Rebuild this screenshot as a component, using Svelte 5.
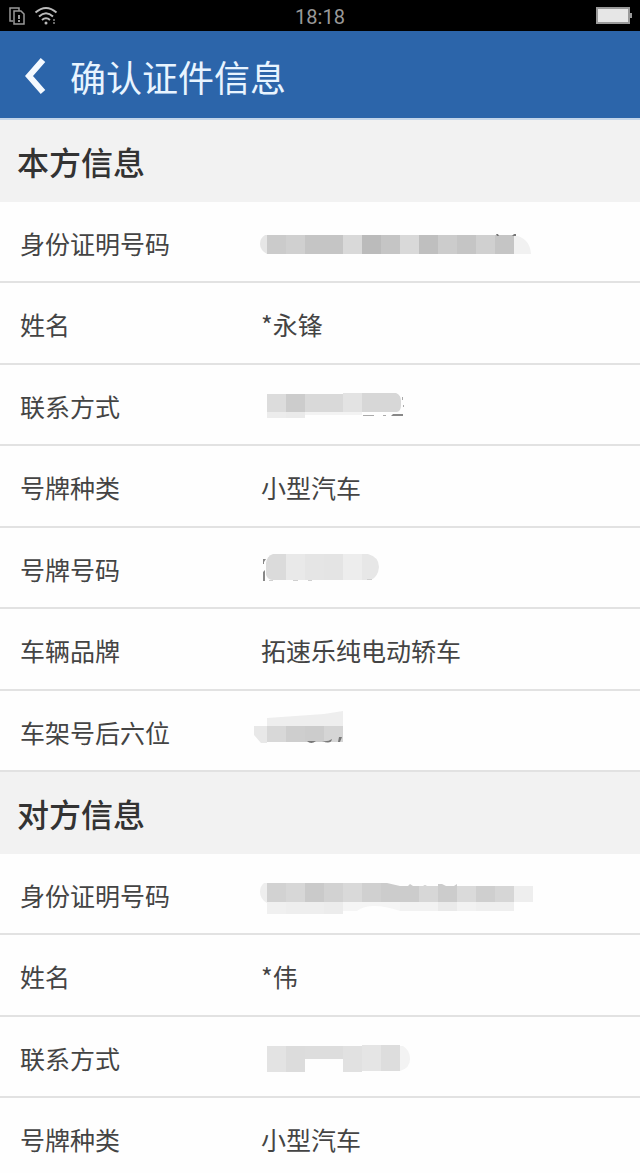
<script lang="ts">
	type Block = [x: number, y: number, width: number, height: number, fill: string];

	interface Mask {
		blocks: Block[];
		shapes?: { d: string; fill: string }[];
	}

	interface Row {
		label: string;
		value?: string;
		mask?: Mask;
	}

	// width of one mosaic tile
	const TILE = 19;

	// a strip of tiles that starts at the given column
	const strip = (start: number, y: number, height: number, fills: string[]): Block[] =>
		fills.map((fill, i) => [15 + (start + i) * TILE, y, TILE, height, fill]);

	const ownId: Mask = {
		blocks: strip(0, 33, 19, [
			'#cbcbcb', '#d0d0d0', '#c5c5c5', '#c5c5c5', '#d9d9d9', '#bbbbbb', '#c5c5c5',
			'#d9d9d9', '#bfbfbf', '#cccccc', '#c5c5c5', '#d0d0d0', '#c5c5c5'
		]),
		shapes: [
			{ d: 'M15 33h-2q-5 3-5 9t7 10z', fill: '#e6e6e6' },
			{ d: 'M262 34h4q12 4 13 18h-17z', fill: '#f1f1f1' },
			{ d: 'M244 32h2l1 2h-2zM260 34l2-2h2v2z', fill: '#777777' }
		]
	};

	const ownPhone: Mask = {
		blocks: [
			...strip(0, 29, 18, ['#dcdcdc', '#cccccc', '#d9d9d9', '#d9d9d9', '#e3e3e3', '#d6d6d6']),
			...strip(0, 47, 6, ['#ececec', '#eaeaea']),
			...strip(2, 47, 3, ['#f3f3f3', '#f3f3f3', '#f3f3f3'])
		],
		shapes: [
			{ d: 'M91 29v-1h53q5 2 5 8v4q0 6-4 7h-35V29z', fill: '#d7d7d7' },
			{ d: 'M91 28h19v19H91z', fill: '#e3e3e3' },
			{ d: 'M111 50h11v1h-11zM131 50h3v1h-3zM150 32h1v3h-1zM151 40h1v2h-1z', fill: '#aaaaaa' },
			{ d: 'M141 49h10v2h-12z', fill: '#888888' }
		]
	};

	const ownPlate: Mask = {
		blocks: strip(1, 26, 26, ['#e9e9e9', '#e5e5e5', '#e4e4e4', '#ededed']),
		shapes: [
			{ d: 'M34 26h-13q-6 2-7 9v12q2 5 7 5h13z', fill: '#dbdbdb' },
			{ d: 'M110 26h6q11 3 11 13-1 10-8 13h-9z', fill: '#e7e7e7' },
			{ d: 'M11 31h3l-2 3v2h-1zM11 44l2-2v11h-2z', fill: '#888888' },
			{ d: 'M17 52h4v1h-4zM41 52h5v1h-5zM56 52h4v1h-4zM115 51h5v1h-5z', fill: '#d0d0d0' }
		]
	};

	const ownFrame: Mask = {
		blocks: strip(0, 35, 16, ['#d8d8d8', '#cecece', '#cccccc', '#d5d5d5']),
		shapes: [
			{ d: 'M15 35v-8l57-4 19-3v15z', fill: '#eeeeee' },
			{ d: 'M15 35H2v9l7 8h6z', fill: '#e8e8e8' },
			{ d: 'M55 50h9q-5 4-9 0M70 50q6 1 10-2-1 6-10 2M87 46h3l-2 5h-2z', fill: '#777777' }
		]
	};

	const otherId: Mask = {
		blocks: [
			...strip(0, 29, 19, [
				'#d2d2d2', '#d7d7d7', '#cacaca', '#d2d2d2', '#d9d9d9', '#d0d0d0'
			]),
			...strip(7, 32, 16, [
				'#cccccc', '#d7d7d7', '#cccccc', '#dadada', '#cfcfcf', '#d6d6d6', '#eeeeee'
			]),
			...strip(0, 48, 12, ['#f0f0f0', '#eeeeee', '#eeeeee', '#ececec']),
			...strip(7, 48, 9, ['#f2f2f2', '#f2f2f2', '#eaeaea', '#f2f2f2', '#efefef', '#efefef'])
		],
		shapes: [
			{ d: 'M15 29h-3q-4 3-4 9 0 7 7 11z', fill: '#eeeeee' },
			{ d: 'M129 29h6l13 3v16h-19z', fill: '#cccccc' },
			{ d: 'M91 48h57v9q-30-10-43 0H91z', fill: '#f5f5f5' },
			{ d: 'M156 32l2-2 3 2zM171 32l2-1 2 1zM186 32v-2h4l4 2zM202 32l3-2v2z', fill: '#cccccc' }
		]
	};

	const otherPhone: Mask = {
		blocks: [
			...strip(0, 29, 26, ['#e3e3e3', '#dcdcdc']),
			...strip(2, 29, 13, ['#dddddd', '#dddddd']),
			...strip(4, 29, 26, ['#e1e1e1']),
			...strip(5, 28, 26, ['#e5e5e5', '#dddddd'])
		],
		shapes: [{ d: 'M148 29h3q7 4 7 13t-10 12z', fill: '#f3f3f3' }]
	};

	const sections: { title: string; rows: Row[] }[] = [
		{
			title: '本方信息',
			rows: [
				{ label: '身份证明号码', mask: ownId },
				{ label: '姓名', value: '*永锋' },
				{ label: '联系方式', mask: ownPhone },
				{ label: '号牌种类', value: '小型汽车' },
				{ label: '号牌号码', mask: ownPlate },
				{ label: '车辆品牌', value: '拓速乐纯电动轿车' },
				{ label: '车架号后六位', mask: ownFrame }
			]
		},
		{
			title: '对方信息',
			rows: [
				{ label: '身份证明号码', mask: otherId },
				{ label: '姓名', value: '*伟' },
				{ label: '联系方式', mask: otherPhone },
				{ label: '号牌种类', value: '小型汽车' }
			]
		}
	];
</script>

<div class="screen">
	<div class="status-bar">
		<div class="status-icons">
			<!-- sim cards -->
			<svg width="18" height="20" viewBox="0 0 18 20" fill="none" stroke="#999" stroke-width="1.5">
				<path d="M5 15H2V2h9v3" />
				<path d="M6 5h7l3 3v10H6z" />
				<path d="M11 9v4M11 14v2" stroke-width="2" />
			</svg>
			<!-- wifi -->
			<svg width="24" height="20" viewBox="0 0 24 20" fill="none" stroke="#bbb" stroke-width="2">
				<path d="M1.5 6.5Q12-2.500 22.500 6.500" />
				<path d="M5 10.500Q12 4 19 10.500" />
				<path d="M8 14Q12 10.500 16 14" />
				<circle cx="12" cy="17" r="1.500" fill="#bbb" stroke="none" />
				<path d="M20 13v2M20 16v2" stroke="#666" />
			</svg>
		</div>
		<time class="clock">18:18</time>
		<svg class="battery" width="36" height="17" viewBox="0 0 36 17">
			<rect x="1" y="1" width="32" height="15" fill="#e6e6e6" stroke="#999" stroke-width="2" />
			<rect x="34" y="6" width="2" height="5" fill="#999" />
		</svg>
	</div>

	<header>
		<button class="back" aria-label="返回">
			<svg width="22" height="38" viewBox="0 0 22 38" fill="none" stroke="#f4f9ff" stroke-width="6">
				<path d="M19 3L5 19l14 16" />
			</svg>
		</button>
		<h1>确认证件信息</h1>
	</header>

	<main>
		{#each sections as section}
			<section>
				<h2>{section.title}</h2>
				<dl>
					{#each section.rows as row}
						<div class="row">
							<dt>{row.label}</dt>
							<dd>
								{#if row.mask}
									<!-- mosaic over the private value -->
									<svg class="mask" width="300" height="79" viewBox="0 0 300 79">
										{#each row.mask.blocks as [x, y, width, height, fill]}
											<rect {x} {y} {width} {height} {fill} />
										{/each}
										{#each row.mask.shapes ?? [] as shape}
											<path d={shape.d} fill={shape.fill} />
										{/each}
									</svg>
								{:else}
									<span>{row.value}</span>
								{/if}
							</dd>
						</div>
					{/each}
				</dl>
			</section>
		{/each}
	</main>
</div>

<style>
	:global(body) {
		margin: 0;
		background: #fefefe;
	}

	.screen {
		height: 100vh;
		overflow: hidden;
		font-family: 'Noto Sans CJK SC', 'Noto Sans', sans-serif;
		color: #444;
		background: #fefefe;
	}

	.status-bar {
		display: grid;
		grid-template-columns: 1fr auto 1fr;
		align-items: center;
		height: 31px;
		padding: 0 8px;
		background: #000;
	}

	.status-icons {
		display: flex;
		align-items: center;
		gap: 8px;
	}

	.clock {
		padding-top: 2px;
		font-family: Roboto, sans-serif;
		font-size: 20px;
		line-height: 28px;
		color: #999;
	}

	.battery {
		justify-self: end;
	}

	header {
		display: flex;
		align-items: center;
		gap: 24px;
		box-sizing: border-box;
		height: 89px;
		padding-top: 2px;
		padding-left: 24px;
		background: #2c65aa;
		border-bottom: 2px solid #c3d5e9;
	}

	.back {
		display: flex;
		padding: 0;
		border: none;
		background: none;
		cursor: pointer;
	}

	h1 {
		margin: 0;
		font-size: 36px;
		font-weight: 400;
		line-height: 48px;
		color: #e8f4ff;
	}

	h2 {
		margin: 0;
		padding: 0 17px;
		font-size: 32px;
		font-weight: 500;
		line-height: 82px;
		color: #333;
		background: #f2f2f2;
	}

	dl {
		margin: 0;
	}

	.row {
		display: grid;
		grid-template-columns: 232px 1fr;
		align-items: center;
		box-sizing: border-box;
		height: 81px;
		padding-left: 20px;
		font-size: 25px;
		line-height: 40px;
		border-bottom: 2px solid #e2e2e2;
	}

	.row:nth-child(even) {
		height: 82px;
	}

	dt {
		padding-top: 2px;
	}

	dd {
		margin: 0;
	}

	dd span {
		display: block;
		padding-top: 2px;
		padding-left: 9px;
	}

	.mask {
		display: block;
	}
</style>
